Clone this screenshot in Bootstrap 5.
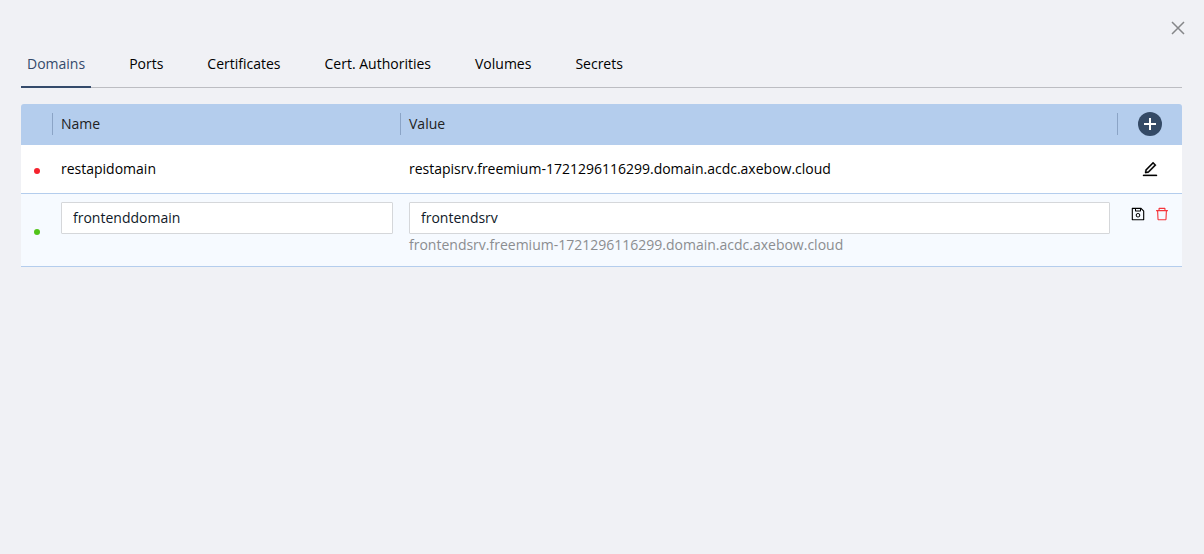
<!DOCTYPE html>
<html lang="en">
<head>
<meta charset="utf-8">
<meta name="viewport" content="width=device-width, initial-scale=1">
<title>Resources</title>
<link href="https://cdn.jsdelivr.net/npm/bootstrap@5.3.0/dist/css/bootstrap.min.css" rel="stylesheet">
<style>
  body { background: #f0f1f5; color: #000; font: 14px/24px "Open Sans", sans-serif; padding: 16px 22px 24px 21px; }
  .icon-btn { border: 0; padding: 0; background: none; color: #000; display: inline-flex; }
  .icon-btn svg { display: block; fill: currentColor; }
  .edit-btn svg { stroke: currentColor; stroke-width: 16; }
  .close-btn { color: #858689; margin-right: -8px; }
  .resource-tabs { gap: 0 32px; border-bottom: 1px solid #bcbdc2; margin: 12px 0 16px; }
  .resource-tabs .nav-link { color: #000; padding: 0 6px 10px; border-bottom: 2px solid transparent; margin-bottom: -1px; }
  .resource-tabs .nav-link.active { color: #344a6b; border-color: #344a6b; }
  .resource-table { table-layout: fixed; border-radius: 3px 3px 0 0; overflow: hidden; color: #000; }
  .resource-table th, .resource-table td { border: 0; border-bottom: 1px solid #b4cded; padding: 12px 8px; background: #fff; box-shadow: none; color: #000; }
  .resource-table th { background: #b4cded; color: #222; font-weight: 400; padding: 8px 0; }
  .resource-table tr.editing td { background: #f6faff; padding: 8px; }
  .resource-table .head-label { border-right: 1px solid #8ba4c6; padding: 0 8px; height: 22px; line-height: 22px; margin-bottom: 1px; }
  .col-status { width: 32px; }
  .col-name { width: 348px; }
  .col-actions { width: 64px; }
  .add-btn { width: 24px; height: 24px; background: #344a66; color: #fff; border-radius: 50%; align-items: center; justify-content: center; vertical-align: top; }
  .status-dot { width: 6px; height: 6px; border-radius: 50%; margin: 4px auto 0; }
  .status-dot.down { background: #f5222d; }
  .status-dot.up { background: #52c41a; }
  .resource-table .form-control { height: 32px; padding: 0 11px 1px; border: 1px solid #d5d7da; border-radius: 1px; font-size: 14px; line-height: 22px; color: #0f1a28; background: #fff; }
  .hint { color: #8b8d90; line-height: 22px; padding-bottom: 2px; }
  .delete-btn { color: #f5353b; }
</style>
</head>
<body>
<div class="d-flex justify-content-end">
  <button type="button" class="icon-btn close-btn" aria-label="Close">
    <svg width="24" height="24" viewBox="0 0 24 24"><path d="M6 6L18 18M18 6L6 18" stroke="currentColor" stroke-width="1.5"/></svg>
  </button>
</div>

<nav class="nav resource-tabs" aria-label="Resource types">
  <a class="nav-link active" aria-current="page" href="#domains">Domains</a>
  <a class="nav-link" href="#ports">Ports</a>
  <a class="nav-link" href="#certificates">Certificates</a>
  <a class="nav-link" href="#authorities">Cert. Authorities</a>
  <a class="nav-link" href="#volumes">Volumes</a>
  <a class="nav-link" href="#secrets">Secrets</a>
</nav>

<table class="table resource-table mb-0 align-middle" id="domains">
  <colgroup><col class="col-status"><col class="col-name"><col><col class="col-actions"></colgroup>
  <thead>
    <tr>
      <th scope="col" aria-label="Status"><div class="head-label"></div></th>
      <th scope="col"><div class="head-label">Name</div></th>
      <th scope="col"><div class="head-label">Value</div></th>
      <th scope="col" class="text-center">
        <button type="button" class="icon-btn add-btn" aria-label="Add domain">
          <svg width="12" height="12" viewBox="0 0 12 12"><path d="M5 0h2v5h5v2H7v5H5V7H0V5h5z"/></svg>
        </button>
      </th>
    </tr>
  </thead>
  <tbody>
    <tr>
      <td><div class="status-dot down"></div></td>
      <td>restapidomain</td>
      <td>restapisrv.freemium-1721296116299.domain.acdc.axebow.cloud</td>
      <td>
        <div class="d-flex justify-content-center">
          <button type="button" class="icon-btn edit-btn" aria-label="Edit">
            <svg width="18" height="18" viewBox="0 0 1024 1024"><path d="M257.700 752c2 0 4-.2 6-.5L431.900 722c2-.4 3.900-1.300 5.300-2.800l423.900-423.900a9.960 9.960 0 0 0 0-14.100L694.900 114.900c-1.900-1.900-4.400-2.900-7.100-2.900s-5.200 1-7.100 2.900L256.800 538.800c-1.500 1.500-2.400 3.300-2.800 5.300l-29.500 168.200a33.500 33.500 0 0 0 9.400 29.800c6.600 6.400 14.900 9.900 23.800 9.900zm67.400-174.400L687.800 215l73.300 73.300-362.700 362.600-88.900 15.700 15.600-89zM880 836H144c-17.700 0-32 14.300-32 32v36c0 4.400 3.600 8 8 8h784c4.400 0 8-3.600 8-8v-36c0-17.700-14.300-32-32-32z"/></svg>
          </button>
        </div>
      </td>
    </tr>
    <tr class="editing">
      <td><div class="status-dot up"></div></td>
      <td class="align-top"><input class="form-control" type="text" aria-label="Name" value="frontenddomain"></td>
      <td class="align-top">
        <input class="form-control" type="text" aria-label="Value" aria-describedby="value-hint" value="frontendsrv">
        <div class="hint" id="value-hint">frontendsrv.freemium-1721296116299.domain.acdc.axebow.cloud</div>
      </td>
      <td class="align-top">
        <div class="d-flex gap-2 justify-content-center align-items-center pt-1">
          <button type="button" class="icon-btn" aria-label="Save">
            <svg width="16" height="16" viewBox="0 0 1024 1024"><path d="M893.300 293.300L730.700 130.700c-7.500-7.500-16.700-13-26.700-16V112H144c-17.700 0-32 14.300-32 32v736c0 17.700 14.300 32 32 32h736c17.700 0 32-14.300 32-32V338.500c0-17-6.700-33.200-18.700-45.200zM384 184h256v104H384V184zm456 656H184V184h136v136c0 17.700 14.300 32 32 32h320c17.700 0 32-14.300 32-32V205.800l136 136V840zM512 442c-79.500 0-144 64.500-144 144s64.500 144 144 144 144-64.500 144-144-64.500-144-144-144zm0 224c-44.200 0-80-35.800-80-80s35.800-80 80-80 80 35.800 80 80-35.800 80-80 80z"/></svg>
          </button>
          <button type="button" class="icon-btn delete-btn" aria-label="Delete">
            <svg width="16" height="16" viewBox="0 0 1024 1024"><path d="M360 184h304v72h72v-80c0-35.300-28.700-64-64-64H352c-35.300 0-64 28.700-64 64v80h72v-72zm504 72H160c-17.700 0-32 14.300-32 32v32c0 4.400 3.600 8 8 8h60.400l24.700 523c1.600 34.100 29.800 61 63.900 61h454c34.200 0 62.300-26.800 63.900-61l24.700-523H888c4.400 0 8-3.600 8-8v-32c0-17.700-14.300-32-32-32zM731.300 840H292.700l-24.200-512h487l-24.200 512z"/></svg>
          </button>
        </div>
      </td>
    </tr>
  </tbody>
</table>
<script src="https://cdn.jsdelivr.net/npm/bootstrap@5.3.0/dist/js/bootstrap.bundle.min.js"></script>
</body>
</html>
